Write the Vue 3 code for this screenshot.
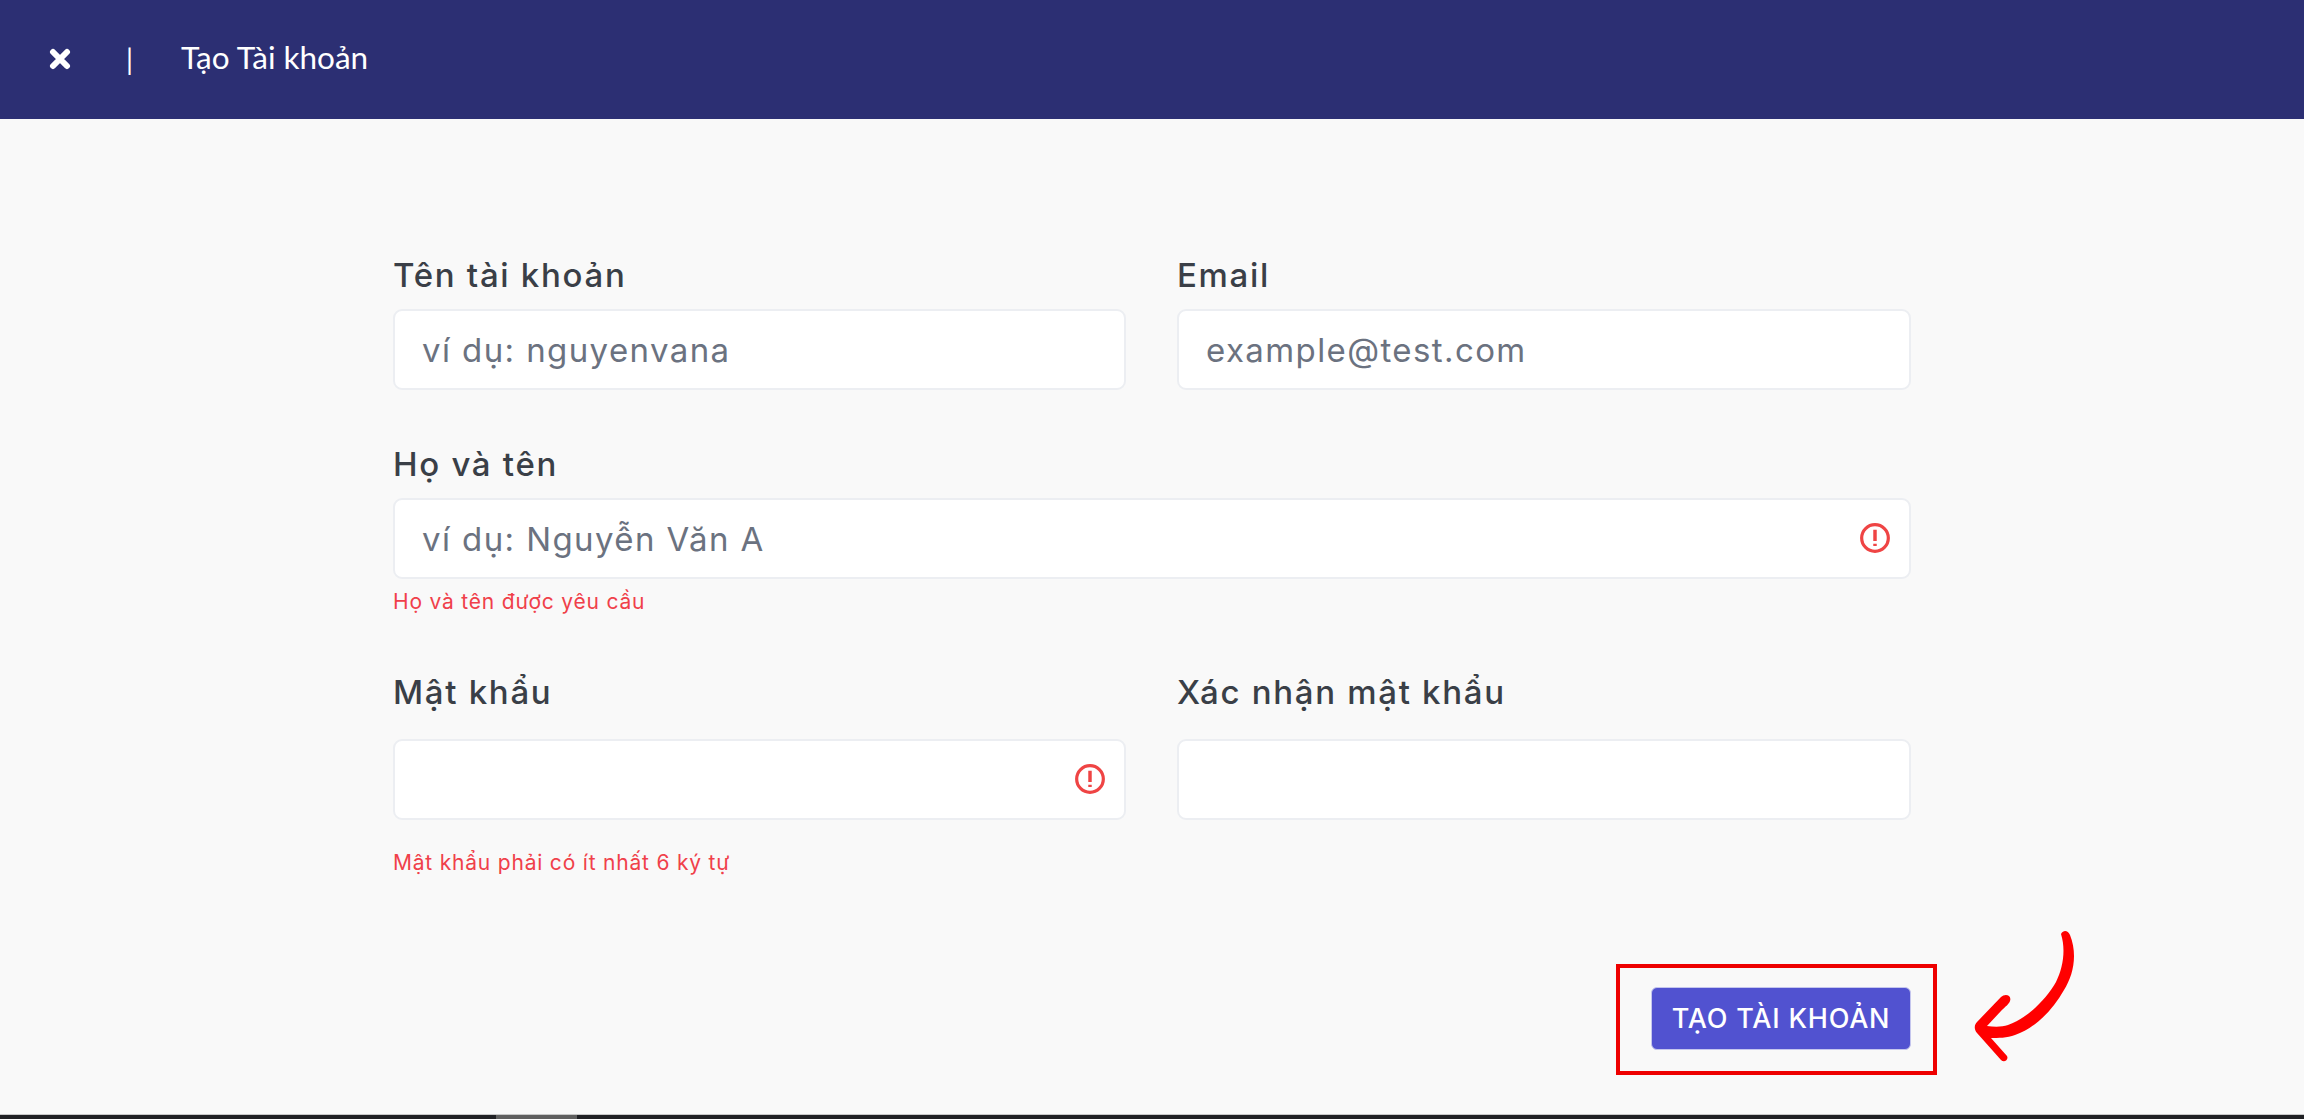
<script setup>
const alertPath = 'M12 5.8v8.4M12 16.4v1.6'
</script>

<template>
  <div class="page">
    <header class="topbar">
      <button class="close" type="button" aria-label="Đóng">
        <svg viewBox="0 0 22 22" width="22" height="22"><path d="M4 4 18 18M18 4 4 18" stroke="#fff" stroke-width="6" stroke-linecap="round" /></svg>
      </button>
      <span class="divider">|</span>
      <h1 class="title">Tạo Tài khoản</h1>
    </header>

    <main class="main">
      <form class="form" @submit.prevent>
        <div class="row two">
          <div class="field">
            <label class="label">Tên tài khoản</label>
            <div class="control"><input class="input" placeholder="ví dụ: nguyenvana" /></div>
          </div>
          <div class="field">
            <label class="label">Email</label>
            <div class="control"><input class="input" placeholder="example@test.com" /></div>
          </div>
        </div>

        <div class="row name-row">
          <div class="field">
            <label class="label">Họ và tên</label>
            <div class="control">
              <input class="input" placeholder="ví dụ: Nguyễn Văn A" />
              <svg class="alert" viewBox="0 0 24 24" width="32" height="32"><circle cx="12" cy="12" r="10" fill="none" stroke="#ef4444" stroke-width="2.4" /><path :d="alertPath" fill="none" stroke="#ef4444" stroke-width="2.6" /></svg>
            </div>
            <p class="error">Họ và tên được yêu cầu</p>
          </div>
        </div>

        <div class="row two pass-row">
          <div class="field">
            <label class="label wide">Mật khẩu</label>
            <div class="control">
              <input class="input" type="password" />
              <svg class="alert" viewBox="0 0 24 24" width="32" height="32"><circle cx="12" cy="12" r="10" fill="none" stroke="#ef4444" stroke-width="2.4" /><path :d="alertPath" fill="none" stroke="#ef4444" stroke-width="2.6" /></svg>
            </div>
            <p class="error low">Mật khẩu phải có ít nhất 6 ký tự</p>
          </div>
          <div class="field">
            <label class="label wide">Xác nhận mật khẩu</label>
            <div class="control"><input class="input" type="password" /></div>
          </div>
        </div>

        <div class="actions">
          <div class="submit-wrap">
            <button class="submit" type="submit">TẠO TÀI KHOẢN</button>
            <span class="highlight"></span>
            <svg class="arrow" viewBox="0 0 170 170" width="170" height="170"><path d="M130 24C133 19 137 21 139 25C147 45 142 66 133 80C122 100 104 118 84 125C76 128 67 128 60 128L76 146C78 150 73 153 70 150L46 123C43 119 43 115 46 112L70 87C74 83 81 85 79 91C78 94 74 97 70 101L56 116C64 117 71 117 77 115C95 109 115 90 125 72C132 58 135 40 130 24Z" fill="#ff0000" /></svg>
          </div>
        </div>
      </form>
    </main>

    <div class="scrollbar"><span class="thumb"></span></div>
  </div>
</template>

<style scoped>
.page {
  height: 1119px;
  display: flex;
  flex-direction: column;
  background: #f9f9f9;
  font-family: Inter, "Noto Sans", sans-serif;
  overflow: hidden;
}
.topbar {
  height: 119px;
  flex: none;
  display: flex;
  align-items: center;
  padding-left: 49px;
  background: #2c2f73;
  color: #fff;
  font-family: Lato, sans-serif;
}
.close {
  display: flex;
  width: 22px;
  height: 22px;
  margin-bottom: 2px;
  padding: 0;
  border: 0;
  background: none;
}
.divider {
  margin-bottom: 2px;
  margin-left: 55px;
  font-size: 28px;
}
.title {
  margin: 0 0 6px 48px;
  font-size: 31.5px;
  font-weight: 400;
}
.main {
  flex: 1;
  padding-top: 136px;
}
.form {
  width: 1518px;
  margin: 0 auto;
}
.row.two {
  display: grid;
  grid-template-columns: 733px 734px;
  column-gap: 51px;
}
.name-row {
  margin-top: 54px;
}
.pass-row {
  margin-top: 58px;
}
.label {
  display: block;
  height: 40px;
  margin-bottom: 14px;
  color: #3a3f47;
  font-size: 33px;
  font-weight: 500;
  letter-spacing: 1.7px;
  line-height: 40px;
}
.label.wide {
  margin-bottom: 27px;
}
.control {
  position: relative;
}
.input {
  display: block;
  box-sizing: border-box;
  width: 100%;
  height: 81px;
  padding: 0 27px;
  border: 2px solid #eceef2;
  border-radius: 9px;
  background: #fff;
  color: #374151;
  font: 400 33px Inter, "Noto Sans", sans-serif;
  letter-spacing: 1.4px;
  outline: none;
}
.input::placeholder {
  color: #6b7280;
  opacity: 1;
}
.alert {
  position: absolute;
  top: 24px;
  right: 20px;
}
.error {
  margin: 11px 0 0;
  color: #f0404a;
  font-size: 21px;
  letter-spacing: 0.8px;
  line-height: 24px;
}
.error.low {
  margin-top: 31px;
}
.actions {
  display: flex;
  justify-content: flex-end;
  margin-top: 112px;
}
.submit-wrap {
  position: relative;
  display: flex;
}
.submit {
  width: 260px;
  height: 63px;
  border: 1px solid #c5c6ee;
  border-radius: 6px;
  background: #5152d0;
  color: #fff;
  font: 500 27px Inter, "Noto Sans", sans-serif;
  letter-spacing: 0.8px;
  white-space: nowrap;
}
.highlight {
  position: absolute;
  top: -23px;
  right: -26px;
  bottom: -25px;
  left: -35px;
  border: 4px solid #ee0000;
}
.arrow {
  position: absolute;
  top: -77px;
  left: 280px;
}
.scrollbar {
  flex: none;
  height: 4px;
  border-top: 1px solid #c8c8c8;
  background: #202124;
}
.thumb {
  display: block;
  width: 81px;
  height: 4px;
  margin-left: 496px;
  background: #5f5f5f;
}
</style>
